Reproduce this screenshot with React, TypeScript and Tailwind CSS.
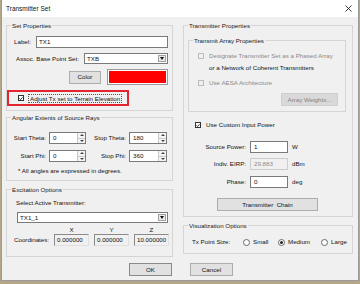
import React from "react";

const FONT = "font-['Liberation_Sans',Arial,sans-serif]";

function Group({
  title,
  className = "",
  children,
}: {
  title: string;
  className?: string;
  children?: React.ReactNode;
}) {
  return (
    <fieldset className={`border border-[#d5d5d5] min-w-0 ${className}`}>
      <legend className="ml-[4px] px-[1px] leading-[7px] text-[#1a1a1a]">{title}</legend>
      {children}
    </fieldset>
  );
}

function Check({ checked = false, disabled = false }: { checked?: boolean; disabled?: boolean }) {
  return (
    <span
      className={`inline-flex shrink-0 items-center justify-center w-[6px] h-[6px] border ${
        disabled ? "border-[#bcbcbc] bg-[#f0f0f0]" : "border-[#333333] bg-white"
      }`}
    >
      {checked && (
        <svg width="5" height="5" viewBox="0 0 5 5">
          <path d="M0.6 2.4 L1.9 3.7 L4.4 1" stroke="#111" strokeWidth="1.1" fill="none" />
        </svg>
      )}
    </span>
  );
}

function Radio({ checked = false, label }: { checked?: boolean; label: string }) {
  return (
    <div className="flex items-center gap-[3px]">
      <span className="inline-flex shrink-0 items-center justify-center w-[7px] h-[7px] rounded-full border border-[#6a6a6a] bg-white">
        {checked && <span className="w-[3px] h-[3px] rounded-full bg-[#222]" />}
      </span>
      <span>{label}</span>
    </div>
  );
}

function Spin({ value, className = "" }: { value: string; className?: string }) {
  return (
    <div className={`flex h-[12px] border border-[#7a7a7a] bg-white ${className}`}>
      <span className="flex-1 pl-[3px] leading-[10px]">{value}</span>
      <div className="w-[8px] flex flex-col border-l border-[#c8c8c8] bg-[#f4f4f4]">
        <div className="flex-1 flex items-center justify-center border-b border-[#c8c8c8]">
          <svg width="4" height="2" viewBox="0 0 4 2">
            <path d="M0 2 L2 0 L4 2 Z" fill="#444" />
          </svg>
        </div>
        <div className="flex-1 flex items-center justify-center">
          <svg width="4" height="2" viewBox="0 0 4 2">
            <path d="M0 0 L2 2 L4 0 Z" fill="#444" />
          </svg>
        </div>
      </div>
    </div>
  );
}

function Select({ value, className = "" }: { value: string; className?: string }) {
  return (
    <div className={`flex h-[11px] border border-[#7a7a7a] bg-white ${className}`}>
      <span className="flex-1 pl-[2px] leading-[9px]">{value}</span>
      <div className="w-[8px] m-[1px] flex items-center justify-center border border-[#a0a0a0] bg-[#e8e8e8]">
        <svg width="4" height="3" viewBox="0 0 4 3">
          <path d="M0 0 L4 0 L2 3 Z" fill="#111" />
        </svg>
      </div>
    </div>
  );
}

function Btn({
  children,
  className = "",
  disabled = false,
}: {
  children: React.ReactNode;
  className?: string;
  disabled?: boolean;
}) {
  return (
    <div
      className={`flex items-center justify-center h-[13px] border ${
        disabled ? "border-[#cfcfcf] bg-[#d9d9d9] text-[#838383]" : "border-[#adadad] bg-[#e1e1e1] text-[#111]"
      } ${className}`}
    >
      {children}
    </div>
  );
}

function Coord({ value }: { value: string }) {
  return (
    <div className="w-[35px] h-[12px] border border-[#8a8a8a] border-r-[#e0e0e0] border-b-[#e0e0e0] bg-[#f0f0f0] leading-[10px] pl-[2px]">
      {value}
    </div>
  );
}

export default function App() {
  return (
    <div className={`${FONT} w-[360px] h-[284px] bg-[#b5a68a] overflow-hidden text-[6.2px] text-[#111]`}>
      <div className="ml-[1px] w-[358px] h-[281px] bg-[#f0f0f0] border border-[#9a9a9a] border-t-0 flex flex-col">
        {/* Title bar */}
        <div className="h-[17px] bg-white flex items-center justify-between pl-[4px] pr-[6px]">
          <span className="text-[6.5px] pt-[1px]">Transmitter Set</span>
          <svg width="7" height="7" viewBox="0 0 7 7">
            <path d="M0.5 0.5 L6.5 6.5 M6.5 0.5 L0.5 6.5" stroke="#222" strokeWidth="0.9" />
          </svg>
        </div>

        <div className="flex pl-[4px] pt-[5px]">
          {/* Left column */}
          <div className="w-[167px] flex flex-col">
            <Group title="Set Properties" className="h-[89px]">
              <div className="flex items-center mt-[7px] pl-[7px] pr-[4px]">
                <span className="w-[22px]">Label:</span>
                <div className="flex-1 h-[12px] border border-[#7a7a7a] bg-white pl-[2px] leading-[10px]">TX1</div>
              </div>
              <div className="flex items-center mt-[5px] pl-[9px] pr-[4px]">
                <span className="w-[68px]">Assoc. Base Point Set:</span>
                <Select value="TXB" className="flex-1" />
              </div>
              <div className="flex items-center justify-end mt-[5px] pr-[4px] gap-[6px]">
                <Btn className="w-[32px]">Color</Btn>
                <div className="w-[61px] h-[16px] border border-[#9a9a9a] bg-white p-[1px]">
                  <div className="w-full h-full bg-[#ff0000]" />
                </div>
              </div>
              <div className="mt-[5px] w-[122px] h-[16px] border-2 border-[#e3262e] flex items-center pl-[9px] gap-[4px]">
                <Check checked />
                <span className="border border-dotted border-[#555] px-[1px] leading-[7px]">
                  Adjust Tx set to Terrain Elevation
                </span>
              </div>
            </Group>

            <Group title="Angular Extents of Source Rays" className="h-[67px] mt-[3px]">
              <div className="flex items-center mt-[11px]">
                <span className="w-[42px] text-right pr-[3px]">Start Theta:</span>
                <Spin value="0" className="w-[37px]" />
                <span className="w-[43px] text-right pr-[3px]">Stop Theta:</span>
                <Spin value="180" className="w-[38px]" />
              </div>
              <div className="flex items-center mt-[6px]">
                <span className="w-[42px] text-right pr-[3px]">Start Phi:</span>
                <Spin value="0" className="w-[37px]" />
                <span className="w-[43px] text-right pr-[3px]">Stop Phi:</span>
                <Spin value="360" className="w-[38px]" />
              </div>
              <div className="mt-[5px] pl-[11px] leading-[8px]">* All angles are expressed in degrees.</div>
            </Group>

            <Group title="Excitation Options" className="h-[71px] mt-[5px]">
              <div className="mt-[6px] pl-[9px] leading-[8px]">Select Active Transmitter:</div>
              <Select value="TX1_1" className="mt-[5px] ml-[10px] mr-[4px]" />
              <div className="flex mt-[3px] leading-[7px] pl-[47px] gap-[5px]">
                <span className="w-[35px] text-center">X</span>
                <span className="w-[35px] text-center">Y</span>
                <span className="w-[35px] text-center">Z</span>
              </div>
              <div className="flex items-center mt-[1px] pl-[7px] gap-[5px]">
                <span className="w-[35px]">Coordinates:</span>
                <Coord value="0.000000" />
                <Coord value="0.000000" />
                <Coord value="10.000000" />
              </div>
            </Group>
          </div>

          {/* Right column */}
          <div className="w-[170px] ml-[10px] flex flex-col">
            <Group title="Transmitter Properties" className="h-[195px]">
              <Group title="Transmit Array Properties" className="h-[75px] mt-[8px] ml-[4px] mr-[6px]">
                <div className="flex items-center mt-[8px] pl-[9px] gap-[5px] leading-[8px]">
                  <Check disabled />
                  <span className="text-[#8a8a8a]">Designate Transmitter Set as a Phased Array</span>
                </div>
                <div className="pl-[20px] leading-[8px] mt-[4px]">or a Network of Coherent Transmitters</div>
                <div className="flex items-center mt-[7px] pl-[9px] gap-[5px] leading-[8px]">
                  <Check disabled />
                  <span className="text-[#8a8a8a]">Use AESA Architecture</span>
                </div>
                <div className="flex justify-end mt-[6px] pr-[7px]">
                  <Btn disabled className="w-[57px]">
                    Array Weights...
                  </Btn>
                </div>
              </Group>

              <div className="flex items-center mt-[9px] pl-[11px] gap-[5px] leading-[8px]">
                <Check checked />
                <span>Use Custom Input Power</span>
              </div>

              <div className="flex items-center mt-[12px]">
                <span className="w-[62px] text-right">Source Power:</span>
                <div className="ml-[4px] w-[38px] h-[12px] border border-[#7a7a7a] bg-white pl-[3px] leading-[10px]">1</div>
                <span className="ml-[4px]">W</span>
              </div>
              <div className="flex items-center mt-[5px]">
                <span className="w-[62px] text-right">Indiv. EIRP:</span>
                <div className="ml-[4px] w-[38px] h-[12px] border border-[#cccccc] bg-[#f0f0f0] pl-[3px] leading-[10px] text-[#8a8a8a]">
                  29.883
                </div>
                <span className="ml-[4px]">dBm</span>
              </div>
              <div className="flex items-center mt-[6px]">
                <span className="w-[62px] text-right">Phase:</span>
                <div className="ml-[4px] w-[38px] h-[12px] border border-[#7a7a7a] bg-white pl-[3px] leading-[10px]">0</div>
                <span className="ml-[4px]">deg</span>
              </div>
              <div className="flex justify-center mt-[10px] pr-[1px]">
                <Btn className="w-[101px]">Transmitter&nbsp;&nbsp;Chain</Btn>
              </div>
            </Group>

            <Group title="Visualization Options" className="h-[32px] mt-[5px]">
              <div className="grid grid-cols-[51px_35px_43px_1fr] items-center mt-[9px] ml-[8px] leading-[8px]">
                <span>Tx Point Size:</span>
                <Radio label="Small" />
                <Radio checked label="Medium" />
                <Radio label="Large" />
              </div>
            </Group>
          </div>
        </div>

        {/* Buttons */}
        <div className="flex mt-[6px] pl-[127px] gap-[18px]">
          <Btn className="w-[43px] !border-[#8a8a8a]">OK</Btn>
          <Btn className="w-[43px]">Cancel</Btn>
        </div>
      </div>
    </div>
  );
}
